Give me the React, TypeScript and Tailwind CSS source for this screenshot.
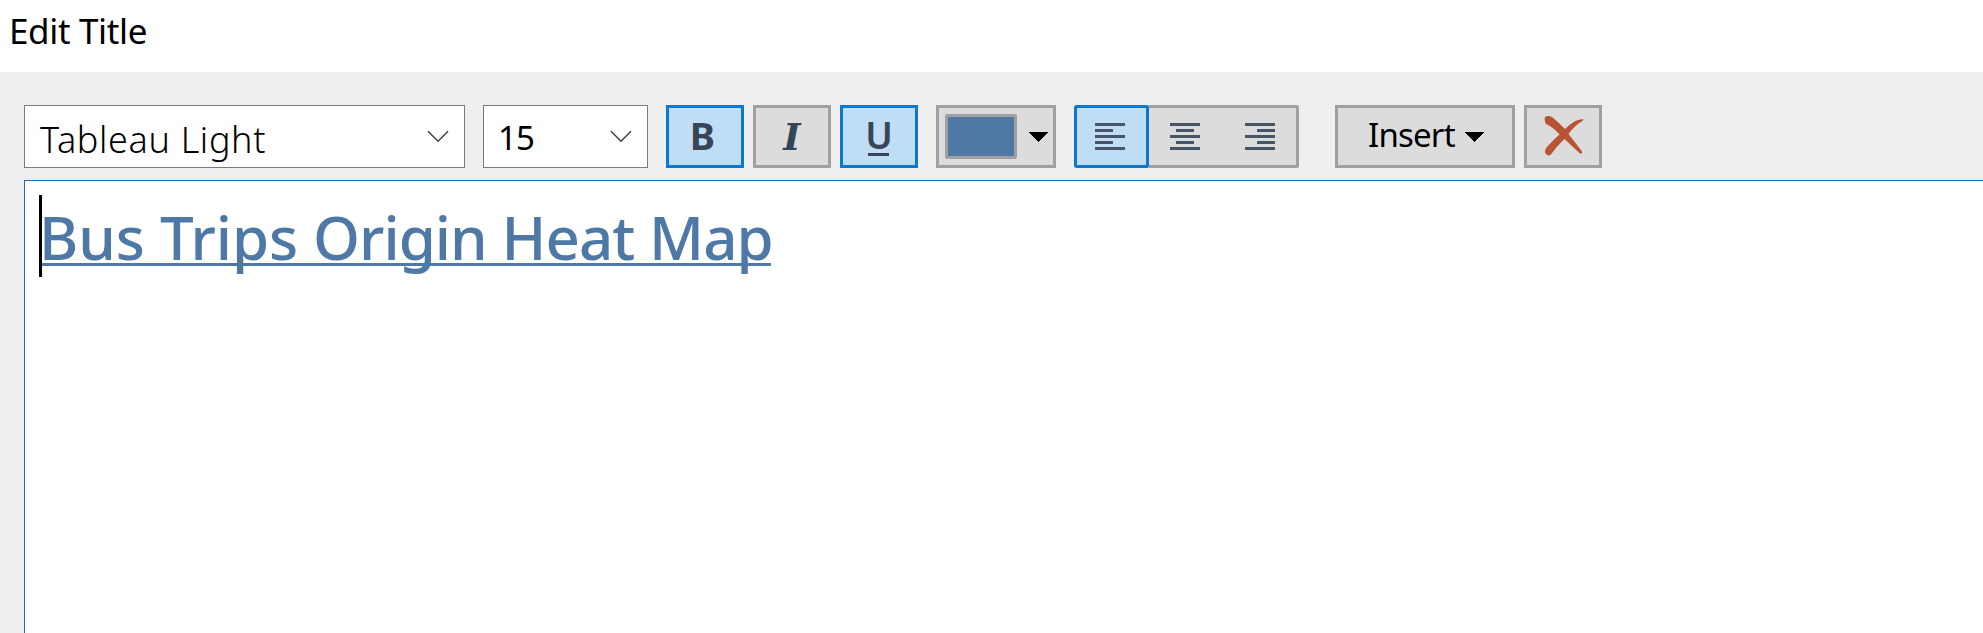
import type { ReactNode } from "react";

function Chevron() {
  return (
    <svg width="22" height="13" viewBox="0 0 22 13" fill="none" stroke="#404040" strokeWidth="1.5">
      <path d="M1 1.2 11 11.2 21 1.2" />
    </svg>
  );
}

function Caret() {
  return (
    <svg width="20" height="10" viewBox="0 0 20 10" shapeRendering="crispEdges">
      <path d="M0 0H20L10 10Z" fill="#000" />
    </svg>
  );
}

function Tool({ active, label, children }: { active?: boolean; label: string; children: ReactNode }) {
  return (
    <button
      aria-label={label}
      className={`flex h-[63px] w-[78px] items-start justify-center border-3 text-[#364658] ${
        active ? "border-[#0c78cf] bg-[#bfddf5]" : "border-[#a0a0a0] bg-[#dcdcdc]"
      }`}
    >
      {children}
    </button>
  );
}

function AlignIcon({ side }: { side: "left" | "center" | "right" }) {
  const x = side === "left" ? 0 : side === "center" ? 6 : 12;
  return (
    <svg width="30" height="27" viewBox="0 0 30 27" fill="#475569" shapeRendering="crispEdges">
      <rect width="30" height="3" />
      <rect x={x} y="6" width="18" height="3" />
      <rect y="12" width="30" height="3" />
      <rect x={x} y="18" width="18" height="3" />
      <rect y="24" width="30" height="3" />
    </svg>
  );
}

export default function App() {
  return (
    <div className="flex h-[633px] w-full flex-col overflow-hidden bg-[#efefef] font-['Noto_Sans',sans-serif] text-black">
      <header className="flex h-[72px] shrink-0 items-start bg-white pl-[9px] pt-[7px]">
        <h1 className="whitespace-nowrap text-[35px] leading-[48px] tracking-[-0.35px]">Edit Title</h1>
      </header>

      <div className="flex h-[108px] shrink-0 items-start pl-6 pt-[33px]">
        <div className="flex h-[63px] w-[441px] items-start justify-between border border-[#7a7a7a] bg-white pl-[15px] pr-[15px]">
          <span className="mt-[9px] whitespace-nowrap text-[36px] font-light leading-[50px] tracking-[0.65px]">
            Tableau Light
          </span>
          <span className="mt-[24px] flex"><Chevron /></span>
        </div>
        <div className="ml-[18px] flex h-[63px] w-[165px] items-start justify-between border border-[#7a7a7a] bg-white pl-[14px] pr-[15px]">
          <span className="mt-[8px] text-[33px] leading-[48px] tracking-[-0.8px]">15</span>
          <span className="mt-[24px] flex"><Chevron /></span>
        </div>

        <div className="ml-[18px] flex gap-[9px]">
          <Tool active label="Bold">
            <span className="-ml-[5px] mt-[2px] text-[38px] font-bold leading-[50px]">B</span>
          </Tool>
          <Tool label="Italic">
            <span className="mt-[4px] font-['DejaVu_Serif',serif] text-[37px] font-bold italic leading-[50px]">I</span>
          </Tool>
          <Tool active label="Underline">
            <span className="mt-[2px] flex flex-col items-center">
              <span className="h-[43px] text-[37px] font-semibold leading-[50px]">U</span>
              <span className="h-[3px] w-[21px] bg-[#364658]" />
            </span>
          </Tool>
        </div>

        <button aria-label="Text color" className="ml-[18px] flex h-[63px] w-[120px] items-center border-3 border-[#a0a0a0] bg-[#dcdcdc] pl-[6px]">
          <span className="h-[45px] w-[72px] rounded-[2px] border-3 border-[#a0a0a0] bg-[#4e79a7]" />
          <span className="ml-[11px] flex"><Caret /></span>
        </button>

        <div className="ml-[18px] flex h-[63px] w-[225px] overflow-hidden rounded-[2px]">
          <button aria-label="Align left" className="flex w-[75px] items-center rounded-[2px] border-3 border-[#0c78cf] bg-[#bfddf5] pl-[18px]">
            <AlignIcon side="left" />
          </button>
          <div className="flex w-[150px] items-center gap-[45px] rounded-r-[2px] border-y-3 border-r-3 border-[#a0a0a0] bg-[#dcdcdc] pl-[21px]">
            <AlignIcon side="center" />
            <AlignIcon side="right" />
          </div>
        </div>

        <button className="ml-[36px] flex h-[63px] w-[180px] items-start border-3 border-[#a0a0a0] bg-[#dcdcdc] pl-[30px]">
          <span className="mt-[3px] w-[96px] whitespace-nowrap text-left text-[33px] leading-[48px] tracking-[-0.8px]">Insert</span>
          <span className="mt-[24px] flex"><Caret /></span>
        </button>
        <button aria-label="Clear" className="ml-[9px] flex h-[63px] w-[78px] items-start border-3 border-[#a0a0a0] bg-[#dcdcdc] pl-[17px] pt-[8px]">
          <svg width="40" height="40" viewBox="0 0 40 40" fill="#b85434">
            <path d="M1 1Q4-1 8 1Q14 6 21 13Q28 6 34 4L39.5 3L38.5 5Q31 9 24.500 18Q30 25 38 35.500Q39 38 36 37.500Q29 31 20.500 23Q12 31 7 38.500Q4 41 1.500 37.500Q0 34 3 31Q9 24 15.500 18.500Q9 11 2 8Q0 5 1 1Z" />
          </svg>
        </button>
      </div>

      <main className="ml-6 flex flex-1 items-start border-l border-t border-[#1a6fb0] bg-white pl-[14px] pt-[14px]">
        <span className="h-[82px] w-[3px] bg-black" />
        <div className="h-[71px] w-[729px] border-b-3 border-[#4e79a7]">
          <p className="-ml-[3px] mt-[1px] whitespace-nowrap text-[60px] font-medium leading-[82px] tracking-[-0.7px] text-[#4e79a7]">
            <span className="tracking-[0px]">Bus</span>{" "}
            <span className="tracking-[-0.1px]">Trips</span>{" "}
            <span className="tracking-[-1px]">Origin</span>{" "}
            <span className="tracking-[-1px]">Heat</span>{" "}
            <span className="tracking-[-1px]">Map</span>
          </p>
        </div>
      </main>
    </div>
  );
}
